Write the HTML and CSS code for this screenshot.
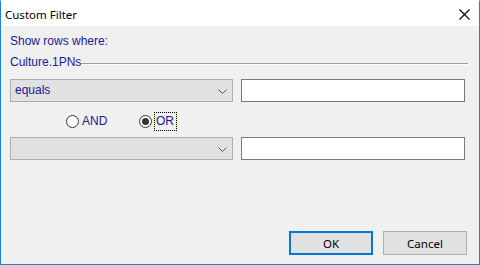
FILE: index.html
```html
<!DOCTYPE html>
<html>
<head>
<meta charset="utf-8">
<link rel="stylesheet" href="styles.css">
</head>
<body>
<div class="window">
  <div class="titlebar">
    <span class="title">Custom Filter</span>
    <span class="close"><svg width="11" height="11" viewBox="0 0 11 11"><path d="M0.5 0.5 L10.5 10.5 M10.5 0.5 L0.5 10.5" stroke="#000" stroke-width="1.1" fill="none"/></svg></span>
  </div>
  <div class="content">
    <div class="label">Show rows where:</div>
    <div class="group">
      <span class="label">Culture.1PNs</span>
      <span class="rule"></span>
    </div>
    <div class="row">
      <div class="combo"><span class="combo-text">equals</span><svg class="chev" width="9" height="5" viewBox="0 0 9 5"><path d="M0.5 0.5 L4.5 4.5 L8.5 0.5" stroke="#555" stroke-width="1" fill="none"/></svg></div>
      <div class="textbox"></div>
    </div>
    <div class="radios">
      <label class="radio and"><span class="circle"></span><span class="rlabel">AND</span></label>
      <label class="radio"><span class="circle checked"></span><span class="rlabel focus">OR</span></label>
    </div>
    <div class="row row2">
      <div class="combo"><span class="combo-text"></span><svg class="chev" width="9" height="5" viewBox="0 0 9 5"><path d="M0.5 0.5 L4.5 4.5 L8.5 0.5" stroke="#555" stroke-width="1" fill="none"/></svg></div>
      <div class="textbox"></div>
    </div>
    <div class="spacer"></div>
    <div class="buttons">
      <div class="btn default">OK</div>
      <div class="btn">Cancel</div>
    </div>
  </div>
</div>
</body>
</html>
```

FILE: styles.css
```css
html, body {
  margin: 0;
  padding: 0;
  background: #f0f0f0;
}
.window {
  width: 480px;
  height: 265px;
  box-sizing: border-box;
  border: 1px solid #1883d7;
  border-top-color: #ffffff;
  display: flex;
  flex-direction: column;
  background: #f0f0f0;
}
.titlebar {
  height: 25px;
  background: #ffffff;
  display: flex;
  align-items: center;
  justify-content: space-between;
  padding: 0 9px 0 4px;
  flex: none;
}
.title {
  font-family: "Segoe UI", "Noto Sans", "Open Sans", sans-serif;
  font-size: 11.5px;
  color: #000;
  padding-top: 1px;
}
.close {
  display: flex;
  width: 11px;
  height: 11px;
  margin-top: 1px;
}
.content {
  flex: 1;
  display: flex;
  flex-direction: column;
  padding: 9px 14px 9px 9px;
  font-family: "Liberation Sans", Arial, sans-serif;
  font-size: 12px;
  color: #1c1896;
}
.label {
  line-height: 13px;
  height: 13px;
}
.group {
  display: flex;
  align-items: center;
  margin-top: 8px;
  margin-right: -3px;
}
.rule {
  flex: 1;
  height: 0;
  border-top: 1px solid #a0a0a0;
  border-bottom: 1px solid #ffffff;
  margin-top: 2px;
}
.row {
  display: flex;
  gap: 8px;
  margin-top: 10px;
  height: 23px;
}
.row2 {
  margin-top: 6px;
}
.combo {
  width: 223px;
  box-sizing: border-box;
  border: 1px solid #adadad;
  background: #e1e1e1;
  display: flex;
  align-items: center;
  justify-content: space-between;
  padding: 0 5px 0 4px;
}
.combo-text {
  line-height: 13px;
}
.chev {
  display: block;
  margin-top: 1px;
}
.textbox {
  width: 224px;
  box-sizing: border-box;
  border: 1px solid #7a7a7a;
  background: #ffffff;
}
.radios {
  display: flex;
  margin-top: 10px;
  height: 19px;
  padding-left: 56px;
  align-items: center;
}
.radio {
  display: flex;
  align-items: center;
}
.radio.and {
  width: 73px;
}
.circle {
  width: 13px;
  height: 13px;
  box-sizing: border-box;
  border: 1px solid #333333;
  border-radius: 50%;
  background: #ffffff;
  display: flex;
  align-items: center;
  justify-content: center;
}
.circle.checked::after {
  content: "";
  width: 7px;
  height: 7px;
  border-radius: 50%;
  background: #333333;
}
.rlabel {
  margin-left: 3px;
  line-height: 13px;
}
.rlabel.focus {
  outline: 1px dotted #000;
  box-shadow: 0 0 0 1px #f4f0a0;
  margin-left: 3px;
  padding: 2px 2px 2px 1px;
}
.spacer {
  flex: 1;
}
.buttons {
  display: flex;
  justify-content: flex-end;
  gap: 10px;
  margin-right: -2px;
}
.btn {
  width: 84px;
  height: 24px;
  box-sizing: border-box;
  border: 1px solid #adadad;
  background: #e1e1e1;
  display: flex;
  align-items: center;
  justify-content: center;
  font-family: "Segoe UI", "Noto Sans", "Open Sans", sans-serif;
  font-size: 11.5px;
  color: #000;
}
.btn.default {
  border: 2px solid #0078d7;
}
```
